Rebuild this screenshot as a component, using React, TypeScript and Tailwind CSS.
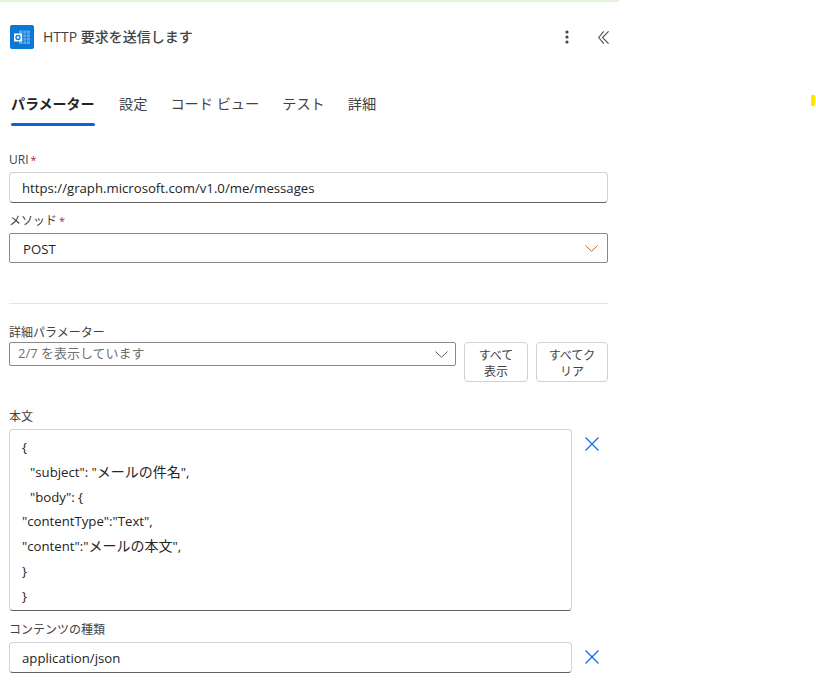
import React from "react";

const Star = () => <span className="text-[#b3283f] ml-[2px] text-[11px]">*</span>;

const Label = ({ children, className }: { children: React.ReactNode; className: string }) => (
  <div className={`h-[16px] text-[12px] leading-[18px] text-[#424242] ${className}`}>{children}</div>
);

const CloseX = ({ className }: { className: string }) => (
  <svg width="16" height="16" viewBox="0 0 16 16" className={className} fill="none">
    <path d="M1.500 1.500 14.500 14.500M14.500 1.500 1.500 14.500" stroke="#0f6cf5" strokeWidth="1.3" />
  </svg>
);

const Chevron = ({ stroke }: { stroke: string }) => (
  <svg width="13" height="7" viewBox="0 0 13 7" fill="none">
    <path d="M.5.500 6.500 6.300 12.500.500" stroke={stroke} strokeWidth="1" />
  </svg>
);

const OutlookIcon = () => (
  <div className="w-6 h-6 rounded-[2px] bg-[#0a78d6] flex items-center justify-center">
    <svg width="18" height="15" viewBox="0 0 18 15" fill="none">
      <rect x="6" y="0.500" width="11" height="13.500" fill="#5ea6e4" />
      <path d="M6 4h11M6 7.500h11M6 11h11M10 .5v13.500M13.500 .5v13.500" stroke="#0a78d6" strokeWidth="0.7" />
      <rect x="1" y="3.500" width="8" height="8" fill="#ffffff" />
      <circle cx="5" cy="7.500" r="2" stroke="#0a78d6" strokeWidth="1.300" />
    </svg>
  </div>
);

const J = ({ children }: { children: React.ReactNode }) => <span className="text-[14px] leading-none">{children}</span>;

const codeLines: { n: React.ReactNode; cls: string }[] = [
  { n: "{", cls: "" },
  { n: <>"subject": "<J>メールの件名</J>",</>, cls: "pl-2" },
  { n: '"body": {', cls: "pl-2" },
  { n: '"contentType":"Text",', cls: "" },
  { n: <>"content":"<J>メールの本文</J>",</>, cls: "" },
  { n: "}", cls: "" },
  { n: "}", cls: "" },
];

const tabs = ["設定", "コード ビュー", "テスト", "詳細"];

export default function App() {
  return (
    <div
      className="relative w-[816px] h-[689px] overflow-hidden bg-white text-[#242424]"
      style={{ fontFamily: '"Open Sans", "Noto Sans CJK JP", sans-serif' }}
    >
      <div className="absolute left-[811px] top-[95px] w-1 h-[11px] bg-[#ffe600]" />
      <div className="w-[619px]">
        <div className="h-[2px] bg-[#e2f5dc]" />
        <header className="h-[46px] mt-[12px] pl-[10px] pr-[10px] flex items-center">
          <OutlookIcon />
          <div className="ml-[9px] pb-[2px] text-[14px] font-medium text-[#424242] flex-1">HTTP 要求を送信します</div>
          <svg width="4" height="14" viewBox="0 0 4 14" className="mr-[29px]" fill="#424242">
            <circle cx="2" cy="2" r="1.600" />
            <circle cx="2" cy="7" r="1.600" />
            <circle cx="2" cy="12" r="1.600" />
          </svg>
          <svg width="11" height="13" viewBox="0 0 11 13" fill="none" stroke="#505050" strokeWidth="1.100">
            <path d="M5.800.300.700 6.500 5.800 12.700M10.600.300 4.500 6.500 10.600 12.700" />
          </svg>
        </header>

        <nav className="mt-[27px] pl-[11px] flex items-start h-[39px]">
          <div className="w-[84px] h-[39px] flex flex-col justify-between mr-[24px]">
            <span className="text-[14px] font-bold text-[#242424] leading-[34px] whitespace-nowrap">パラメーター</span>
            <span className="h-[3px] rounded-full bg-[#0f62d6]" />
          </div>
          <div className="flex gap-[23px] text-[14.200px] leading-[34px] text-[#424242]">
            {tabs.map((t) => (
              <span key={t} className="whitespace-nowrap">{t}</span>
            ))}
          </div>
        </nav>

        <div className="pl-[9px] pr-[11px]">
          <Label className="mt-[25px]">URI<Star /></Label>
          <div className="mt-[5px] h-[31px] rounded-[4px] border border-[#d1d1d1] border-b-[#616161] pl-[12px] pt-[2px] flex items-center text-[13.200px]">
            https://graph.microsoft.com/v1.0/me/messages
          </div>

          <Label className="mt-[9px]">メソッド<Star /></Label>
          <div className="mt-[5px] h-[30px] rounded-[2px] border border-[#8a8a8a] pl-[13px] pr-[9px] flex items-center justify-between text-[13.200px]">
            <span className="pt-[3px]">POST</span>
            <Chevron stroke="#b06a30" />
          </div>

          <div className="mt-[40px] h-px bg-[#e5e5e5]" />

          <Label className="mt-[20px]">詳細パラメーター</Label>
          <div className="mt-[2px] flex items-start">
            <div className="w-[447px] h-[24px] rounded-[2px] border border-[#8a8a8a] pl-[8px] pr-[7px] flex items-center justify-between text-[13px] text-[#707070]">
              <span>2/7 を表示しています</span>
              <Chevron stroke="#616161" />
            </div>
            <button className="ml-[8px] w-[64px] h-[40px] pt-[4px] rounded-[4px] border border-[#d1d1d1] text-[12px] leading-[16px] text-[#424242]">
              すべて<br />表示
            </button>
            <button className="ml-[8px] w-[72px] h-[40px] pt-[4px] rounded-[4px] border border-[#d1d1d1] text-[12px] leading-[16px] text-[#424242]">
              すべてク<br />リア
            </button>
          </div>

          <Label className="mt-[26px]">本文</Label>
          <div className="mt-[5px] flex items-start">
            <div className="w-[563px] h-[182px] rounded-[4px] border border-[#d1d1d1] border-b-[#616161] pl-[12px] pt-[5px] text-[13.200px] leading-[24.800px] text-[#242424]">
              {codeLines.map((l, i) => (
                <div key={i} className={l.cls}>{l.n}</div>
              ))}
            </div>
            <CloseX className="ml-[12px] mt-[7px]" />
          </div>

          <Label className="mt-[10px]">コンテンツの種類</Label>
          <div className="mt-[5px] flex items-start">
            <div className="w-[563px] h-[31px] rounded-[4px] border border-[#d1d1d1] border-b-[#616161] pl-[12px] pt-[2px] flex items-center text-[13.200px]">
              application/json
            </div>
            <CloseX className="ml-[12px] mt-[7px]" />
          </div>
        </div>
      </div>
    </div>
  );
}
